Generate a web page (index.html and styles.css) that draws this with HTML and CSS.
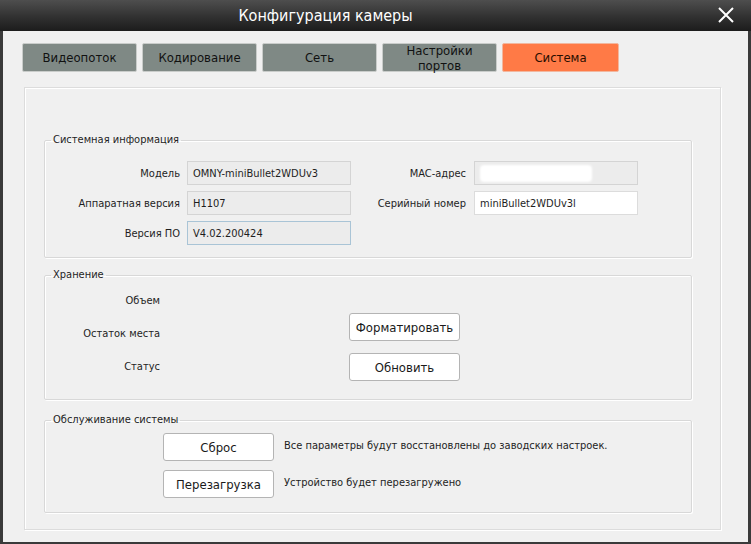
FILE: index.html
```html
<!DOCTYPE html>
<html lang="ru">
<head>
  <meta charset="UTF-8" />
  <title>Конфигурация камеры</title>
  <link rel="stylesheet" href="styles.css">
</head>
<body>
  <div class="window">
    <!-- заголовок окна -->
    <div class="titlebar">
      <span class="title">Конфигурация камеры</span>
      <span class="close">
        <svg width="18" height="18" viewBox="0 0 18 18"><path d="M2 2 L16 16 M16 2 L2 16" stroke="#fff" stroke-width="2" fill="none"/></svg>
      </span>
    </div>

    <div class="content">
      <!-- вкладки -->
      <div class="tabs">
        <div class="tab">Видеопоток</div>
        <div class="tab">Кодирование</div>
        <div class="tab">Сеть</div>
        <div class="tab two-line">Настройки<br>портов</div>
        <div class="tab active">Система</div>
      </div>

      <div class="panel">
        <fieldset class="group">
          <legend>Системная информация</legend>
          <div class="info-grid">
            <div class="label">Модель</div>
            <div class="field">OMNY-miniBullet2WDUv3</div>
            <div class="label">MAC-адрес</div>
            <div class="field"><span class="hidden mac"></span></div>

            <div class="label">Аппаратная версия</div>
            <div class="field">H1107</div>
            <div class="label">Серийный номер</div>
            <div class="field white">miniBullet2WDUv3l</div>

            <div class="label">Версия ПО</div>
            <div class="field focus">V4.02.200424</div>
          </div>
        </fieldset>

        <fieldset class="group storage">
          <legend>Хранение</legend>
          <div class="storage-row">
            <div class="storage-labels">
              <div>Объем</div>
              <div>Остаток места</div>
              <div>Статус</div>
            </div>
            <div class="storage-buttons">
              <button class="btn">Форматировать</button>
              <button class="btn">Обновить</button>
            </div>
          </div>
        </fieldset>

        <fieldset class="group service">
          <legend>Обслуживание системы</legend>
          <div class="service-row">
            <button class="btn">Сброс</button>
            <span>Все параметры будут восстановлены до заводских настроек.</span>
          </div>
          <div class="service-row">
            <button class="btn">Перезагрузка</button>
            <span>Устройство будет перезагружено</span>
          </div>
        </fieldset>
      </div>
    </div>
  </div>
</body>
</html>
```

FILE: styles.css
```css
body {
  margin: 0;
  background: #2a2a2a;
  font-family: "DejaVu Sans Condensed", "Liberation Sans", sans-serif;
  font-size: 11px;
  color: #1e1e1e;
}

.window {
  width: 751px;
  height: 544px;
  display: flex;
  flex-direction: column;
}

.titlebar {
  height: 31px;
  flex-shrink: 0;
  background: linear-gradient(#4e4e4e, #2e2e2e 60%, #1c1c1c);
  display: flex;
  align-items: center;
  justify-content: center;
  position: relative;
}

.title {
  color: #fff;
  font-size: 16px;
  font-family: "DejaVu Sans Condensed", sans-serif;
  margin-right: 100px;
}

.close {
  position: absolute;
  right: 16px;
  top: 6px;
}

.content {
  flex: 1;
  background: #f0f0f0;
  border-left: 3px solid #3a3a3a;
  border-right: 3px solid #3a3a3a;
  border-bottom: 2px solid #3a3a3a;
  padding: 12px 0 0 19px;
}

.tabs {
  display: flex;
  gap: 5px;
}

.tab {
  width: 115px;
  height: 29px;
  box-sizing: border-box;
  background: #7f8985;
  border: 1px solid #c9ccca;
  border-radius: 2px;
  display: flex;
  align-items: center;
  justify-content: center;
  text-align: center;
  font-size: 13px;
  color: #111;
  line-height: 15px;
}

.tab.two-line {
  padding-top: 1px;
}

.tab.active {
  background: #ff7a46;
  border-color: #f2b79e;
  width: 117px;
  color: #2a0e00;
}

.panel {
  width: 697px;
  height: 443px;
  box-sizing: border-box;
  margin: 15px 0 0 2px;
  border: 1px solid #dcdcdc;
  box-shadow: 1px 1px 0 #fff, inset 1px 1px 0 #fff;
  padding: 44px 0 0 19px;
}

.group {
  width: 648px;
  box-sizing: border-box;
  margin: 0;
  padding: 13px 0 12px 0;
  border: 1px solid #d8d8d8;
  border-radius: 2px;
  box-shadow: inset 1px 1px 0 #fff, 1px 1px 0 #fff;
}

.group legend {
  margin-left: 6px;
  padding: 0 2px;
  line-height: 16px;
}

.info-grid {
  display: grid;
  grid-template-columns: 142px 164px 123px 164px;
  grid-auto-rows: 24px;
  row-gap: 6px;
  align-items: center;
}

.label {
  text-align: right;
  padding-right: 7px;
}

.info-grid .label:nth-child(4n+3) {
  padding-right: 8px;
}

.field {
  height: 24px;
  box-sizing: border-box;
  background: #ececec;
  border: 1px solid #d4d4d4;
  padding: 0 5px;
  display: flex;
  align-items: center;
}

.field.white {
  background: #fff;
  border-color: #dcdcdc;
}

.field.focus {
  border-color: #a9c4d6;
}

/* замазанное значение */
.hidden {
  display: block;
  background: #fff;
  border-radius: 4px;
  filter: blur(1px);
}

.hidden.mac {
  width: 112px;
  height: 17px;
}

.storage {
  margin-top: 9px;
  padding: 0 0 18px 0;
}

.storage-row {
  display: flex;
}

.storage-labels {
  width: 115px;
  text-align: right;
  padding-top: 10px;
  display: flex;
  flex-direction: column;
  gap: 17px;
  line-height: 16px;
}

.storage-buttons {
  margin-left: 189px;
  padding-top: 30px;
  display: flex;
  flex-direction: column;
  gap: 12px;
}

.btn {
  width: 111px;
  height: 28px;
  background: #fff;
  border: 1px solid #b4b4b4;
  border-radius: 3px;
  font-family: "DejaVu Sans Condensed", "Liberation Sans", sans-serif;
  font-size: 13px;
  color: #1a1a1a;
  padding: 0;
}

.service {
  margin-top: 12px;
  padding: 5px 0 14px 0;
}

.service-row {
  display: flex;
  align-items: center;
  gap: 10px;
  padding-left: 118px;
}

.service-row + .service-row {
  margin-top: 9px;
}

.service-row span {
  margin-top: -3px;
}
```
